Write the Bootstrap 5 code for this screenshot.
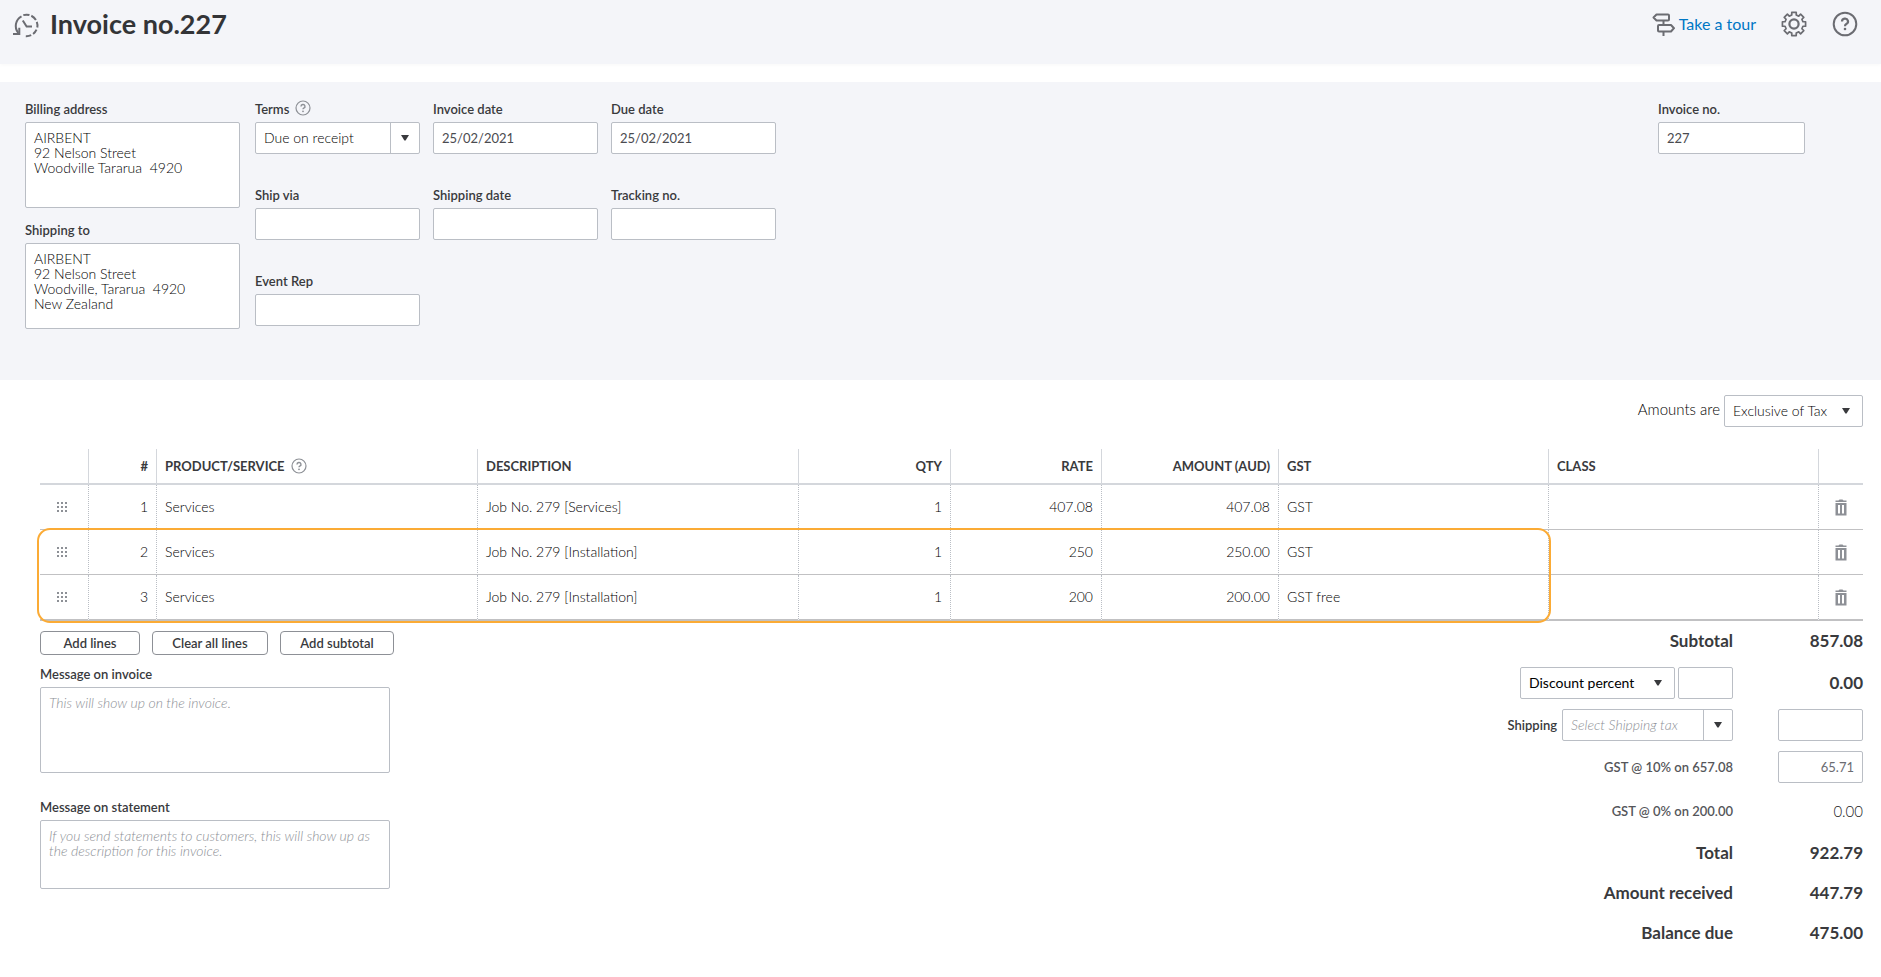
<!DOCTYPE html>
<html lang="en">
<head>
<meta charset="utf-8">
<meta name="viewport" content="width=device-width, initial-scale=1">
<title>Invoice no.227</title>
<link rel="stylesheet" href="https://cdn.jsdelivr.net/npm/bootstrap@5.3.0/dist/css/bootstrap.min.css">
<style>
:root { --ink: #393a3d; --line: #babec5; --panel: #f4f5f9; --arrow: url("data:image/svg+xml,%3Csvg xmlns='http://www.w3.org/2000/svg' viewBox='0 0 10 6'%3E%3Cpath d='M1 0h8L5.600 5.400h-1.200z' fill='%23393a3d'/%3E%3C/svg%3E"); }
body { font-family: Lato, "Liberation Sans", sans-serif; font-size: 13px; line-height: 15px; color: var(--ink); background: #fff; }
.topbar { background: var(--panel); height: 64px; padding: 7px 23px 0 12px; margin-bottom: 18px; box-shadow: 0 1px 4px rgba(0,0,0,.03); }
.topbar h1 { font-size: 27px; line-height: 34px; font-weight: 700; color: #333437; }
.icon-btn { background: none; border: 0; padding: 0; color: #6b6c72; display: block; line-height: 0; }
.top-tools { gap: 25px; }
.tour { font-size: 16px; line-height: 20px; font-weight: 400; color: #0077c5; text-decoration: none; }
.tour svg { color: #6b6c72; }
.details { background: var(--panel); min-height: 298px; padding: 18px 76px 50px 25px; gap: 15px; }
.field-label { font-size: 13px; line-height: 18px; font-weight: 600; margin-bottom: 4px; color: var(--ink); display: block; }
.form-control, .form-select { font-size: 14px; line-height: 20px; height: 32px; padding: 5px 8px; border: 1px solid var(--line); border-radius: 2px; color: #000; font-weight: 300; background-color: #fff; }
input.form-control { font-size: 13px; font-weight: 400; color: #4a4b50; }
textarea.form-control { line-height: 15px; padding: 7px 8px; resize: none; height: 86px; min-height: 0; overflow: hidden; }
textarea.short-area { height: 69px; }
.form-control::placeholder { color: #8d9096; font-style: italic; opacity: 1; }
.form-select { background-image: var(--arrow); background-size: 10px 6px; background-position: right 11px center; background-repeat: no-repeat; }
.form-select.split { background-image: var(--arrow), linear-gradient(var(--line), var(--line)); background-size: 10px 6px, 1px 100%; background-position: right 9px center, right 28px center; }
.address-col { width: 215px; }
.address-col .ship-label { margin-top: 13px; }
.fields { display: grid; grid-template-columns: repeat(3, 165px); column-gap: 13px; row-gap: 32px; align-content: start; }
.inv-no { width: 147px; }
.hint { color: #8d9096; }
.help-mark { margin-left: 6px; }
.work { padding: 15px 18px 20px 40px; }
.amounts { font-size: 15px; font-weight: 300; color: #000; }
.amounts label { padding-bottom: 4px; }
.tax-select { width: 139px; }
.lines-wrap { position: relative; margin-top: 22px; }
.lines { width: 100%; table-layout: fixed; border-collapse: separate; border-spacing: 0; font-size: 14px; line-height: 20px; }
.lines th { height: 36px; padding: 0 8px; font-size: 13px; font-weight: 700; border-bottom: 2px solid #d4d7dc; border-right: 1px solid #d4d7dc; white-space: nowrap; }
.lines td { height: 45px; padding: 0 8px; color: #000; font-weight: 300; border-bottom: 1px solid #c1c1c3; border-right: 1px dotted #babec5; }
.lines tr > :last-child { border-right: 0; }
.lines tbody tr:last-child td { border-bottom-width: 2px; height: 46px; }
.lines .icon-btn { margin: 0 auto; color: #8d9096; }
.lines .grip { margin-left: 9px; }
.callout { position: absolute; left: -3px; right: 17.1%; top: 79px; bottom: -2px; border: 2px solid #fbab35; border-radius: 13px; pointer-events: none; }
.btn-row { gap: 12px; margin: 10px 0; }
.btn-line { font-size: 13px; line-height: 18px; font-weight: 600; height: 24px; padding: 2px 0; color: var(--ink); border: 1px solid #8d9096; border-radius: 4px; background: #fff; }
.w-add { width: 100px; } .w-clear { width: 116px; } .w-sub { width: 114px; }
.messages { width: 350px; }
.messages .second { margin-top: 25px; }
.totals { display: grid; grid-template-columns: auto 130px; align-items: center; justify-items: end; font-weight: 600; }
.totals .big { font-size: 17px; line-height: 20px; font-weight: 700; }
.totals .tall { height: 44px; display: flex; align-items: center; }
.totals .reg { height: 40px; display: flex; align-items: center; }
.totals .gst-note { font-weight: 600; color: #55565a; }
.totals .pair { gap: 3px; }
.totals .ship-row { gap: 5px; }
.discount-select { width: 155px; font-weight: 400; }
.discount-pct { width: 55px; }
.ship-select { width: 171px; font-style: italic; color: #8d9096; }
input.value-box { width: 85px; text-align: right; color: #6b6c72; }
.light { font-size: 15px; font-weight: 300; color: #222; }
</style>
</head>
<body>
<svg width="0" height="0" class="d-none" aria-hidden="true">
  <symbol id="help" viewBox="0 0 16 16"><circle cx="8" cy="8" r="7" fill="none" stroke="currentColor" stroke-width="1.2"/><path d="M6 6.4a2 1.9 0 1 1 2.8 1.7Q8 8.500 8 9.300" fill="none" stroke="currentColor" stroke-width="1.400"/><circle cx="8" cy="11.300" r=".9" fill="currentColor"/></symbol>
  <symbol id="grip" viewBox="0 0 11 11"><path d="M0 0h2v2H0zM4 0h2v2H4zM8 0h2v2H8zM0 4h2v2H0zM4 4h2v2H4zM8 4h2v2H8zM0 8h2v2H0zM4 8h2v2H4zM8 8h2v2H8z" fill="currentColor"/></symbol>
  <symbol id="trash" viewBox="0 0 12 17"><path d="M.5 1.500h3L4.500 .5h3l1 1h3v1.500H.5z" fill="currentColor"/><path fill-rule="evenodd" d="M.5 4h11v12.500H.5zM3 6v8.500h2V6zM7 6v8.500h2V6z" fill="currentColor"/></symbol>
</svg>

<header class="topbar d-flex justify-content-between align-items-start">
  <div class="d-flex align-items-center">
    <button type="button" class="icon-btn me-2" aria-label="Recent transactions">
      <svg width="30" height="28" viewBox="0 0 30 28" fill="none" stroke="currentColor" stroke-width="2"><path d="M6.300 23A11 11 0 0 1 9.500 6.300"/><path d="M1 24h6.300v-6.300"/><path d="M11.300 5.100A11 11 0 0 1 25.300 17.500" stroke-dasharray="6.200 2"/><path d="M24.500 19.700A11 11 0 0 1 12.500 26" stroke-dasharray="5.500 2.200"/><path d="M10.800 10.500l3.800 6h5.400"/></svg>
    </button>
    <h1 class="m-0">Invoice no.227</h1>
  </div>
  <div class="top-tools d-flex align-items-center pt-1">
    <a href="#tour" class="tour d-flex align-items-center gap-1">
      <svg width="23" height="24" viewBox="0 0 23 24" fill="none" stroke="currentColor" stroke-width="2" stroke-linejoin="round"><path d="M4.500 2.500H16q1 0 1 1v4q0 1-1 1H4.500L1.500 5.500z"/><path d="M19 13H7q-1 0-1 1v4.500q0 1 1 1h12l3-3.300z"/><path d="M11.500 8.500V13M11.500 19.500V24"/></svg>
      Take a tour</a>
    <button type="button" class="icon-btn" aria-label="Settings">
      <svg width="26" height="26" viewBox="0 0 26 26" fill="none" stroke="currentColor" stroke-width="1.700" stroke-linejoin="round"><path id="gear" d="M13 1z"/><circle cx="13" cy="13" r="4.600" stroke-width="2.200"/></svg>
    </button>
    <button type="button" class="icon-btn" aria-label="Help">
      <svg width="26" height="26" viewBox="0 0 26 26" fill="none" stroke="currentColor" stroke-width="2"><circle cx="13" cy="13" r="11.300"/><path d="M10 10.500a3 2.800 0 1 1 4.300 2.500q-1.300.6-1.300 2.200" stroke-width="2.200"/><circle cx="13" cy="18" r="1.300" fill="currentColor" stroke="none"/></svg>
    </button>
  </div>
</header>

<main>
<section class="details d-flex">
  <div class="address-col">
    <label class="field-label" for="bill">Billing address</label>
    <textarea class="form-control" id="bill">AIRBENT
92 Nelson Street
Woodville Tararua  4920</textarea>
    <label class="field-label ship-label" for="shipto">Shipping to</label>
    <textarea class="form-control" id="shipto">AIRBENT
92 Nelson Street
Woodville, Tararua  4920
New Zealand</textarea>
  </div>
  <div class="fields">
    <div><div class="d-flex"><label class="field-label" for="terms">Terms</label><svg class="hint help-mark" width="16" height="16"><use href="#help"/></svg></div>
      <select class="form-select split" id="terms"><option>Due on receipt</option></select></div>
    <div><label class="field-label" for="invdate">Invoice date</label><input class="form-control" id="invdate" value="25/02/2021"></div>
    <div><label class="field-label" for="duedate">Due date</label><input class="form-control" id="duedate" value="25/02/2021"></div>
    <div><label class="field-label" for="via">Ship via</label><input class="form-control" id="via"></div>
    <div><label class="field-label" for="shipdate">Shipping date</label><input class="form-control" id="shipdate"></div>
    <div><label class="field-label" for="track">Tracking no.</label><input class="form-control" id="track"></div>
    <div><label class="field-label" for="rep">Event Rep</label><input class="form-control" id="rep"></div>
  </div>
  <div class="inv-no ms-auto"><label class="field-label" for="invno">Invoice no.</label><input class="form-control" id="invno" value="227"></div>
</section>

<section class="work">
  <div class="amounts d-flex justify-content-end align-items-center gap-1">
    <label for="tax">Amounts are</label>
    <select class="form-select tax-select" id="tax"><option>Exclusive of Tax</option></select>
  </div>

  <div class="lines-wrap">
    <table class="lines">
      <colgroup><col style="width:49px"><col style="width:68px"><col style="width:321px"><col style="width:321px"><col style="width:152px"><col style="width:151px"><col style="width:177px"><col style="width:270px"><col style="width:270px"><col style="width:44px"></colgroup>
      <thead><tr>
        <th></th><th class="text-end">#</th>
        <th><span class="d-flex align-items-center">PRODUCT/SERVICE<svg class="hint help-mark" width="16" height="16"><use href="#help"/></svg></span></th>
        <th>DESCRIPTION</th><th class="text-end">QTY</th><th class="text-end">RATE</th><th class="text-end">AMOUNT (AUD)</th><th>GST</th><th>CLASS</th><th></th>
      </tr></thead>
      <tbody>
        <tr><td><button type="button" class="icon-btn grip" aria-label="Move line 1"><svg width="11" height="11"><use href="#grip"/></svg></button></td><td class="text-end">1</td><td>Services</td><td>Job No. 279 [Services]</td><td class="text-end">1</td><td class="text-end">407.08</td><td class="text-end">407.08</td><td>GST</td><td></td><td><button type="button" class="icon-btn" aria-label="Delete line 1"><svg width="12" height="17"><use href="#trash"/></svg></button></td></tr>
        <tr><td><button type="button" class="icon-btn grip" aria-label="Move line 2"><svg width="11" height="11"><use href="#grip"/></svg></button></td><td class="text-end">2</td><td>Services</td><td>Job No. 279 [Installation]</td><td class="text-end">1</td><td class="text-end">250</td><td class="text-end">250.00</td><td>GST</td><td></td><td><button type="button" class="icon-btn" aria-label="Delete line 2"><svg width="12" height="17"><use href="#trash"/></svg></button></td></tr>
        <tr><td><button type="button" class="icon-btn grip" aria-label="Move line 3"><svg width="11" height="11"><use href="#grip"/></svg></button></td><td class="text-end">3</td><td>Services</td><td>Job No. 279 [Installation]</td><td class="text-end">1</td><td class="text-end">200</td><td class="text-end">200.00</td><td>GST free</td><td></td><td><button type="button" class="icon-btn" aria-label="Delete line 3"><svg width="12" height="17"><use href="#trash"/></svg></button></td></tr>
      </tbody>
    </table>
    <div class="callout"></div>
  </div>

  <div class="d-flex justify-content-between align-items-start">
    <div>
      <div class="d-flex btn-row">
        <button type="button" class="btn btn-line w-add">Add lines</button>
        <button type="button" class="btn btn-line w-clear">Clear all lines</button>
        <button type="button" class="btn btn-line w-sub">Add subtotal</button>
      </div>
      <div class="messages">
        <label class="field-label" for="msginv">Message on invoice</label>
        <textarea class="form-control" id="msginv" placeholder="This will show up on the invoice."></textarea>
        <label class="field-label second" for="msgst">Message on statement</label>
        <textarea class="form-control short-area" id="msgst" placeholder="If you send statements to customers, this will show up as the description for this invoice."></textarea>
      </div>
    </div>
    <div class="totals">
      <div class="big reg">Subtotal</div><div class="big reg">857.08</div>
      <div class="tall pair"><select class="form-select discount-select" aria-label="Discount type"><option>Discount percent</option></select><input class="form-control discount-pct" aria-label="Discount"></div><div class="big">0.00</div>
      <div class="reg ship-row"><label for="shiptax">Shipping</label><select class="form-select split ship-select" id="shiptax"><option>Select Shipping tax</option></select></div><input class="form-control value-box" aria-label="Shipping amount">
      <div class="tall gst-note">GST @ 10% on 657.08</div><input class="form-control value-box" aria-label="GST amount" value="65.71">
      <div class="tall gst-note">GST @ 0% on 200.00</div><div class="light">0.00</div>
      <div class="big reg">Total</div><div class="big reg">922.79</div>
      <div class="big reg">Amount received</div><div class="big reg">447.79</div>
      <div class="big reg">Balance due</div><div class="big reg">475.00</div>
    </div>
  </div>
</section>
</main>
<script>
// Eight-toothed settings gear, centred in its 26px box
(function () {
  var pts = [], n = 8;
  for (var i = 0; i < n; i++) {
    [[-14, 9.2], [-11, 11.8], [11, 11.8], [14, 9.2]].forEach(function (p) {
      var a = (i * 360 / n + p[0]) * Math.PI / 180;
      pts.push((13 + p[1] * Math.sin(a)).toFixed(2) + ' ' + (13 - p[1] * Math.cos(a)).toFixed(2));
    });
  }
  document.getElementById('gear').setAttribute('d', 'M' + pts.join('L') + 'Z');
})();
</script>
<script src="https://cdn.jsdelivr.net/npm/bootstrap@5.3.0/dist/js/bootstrap.bundle.min.js"></script>
</body>
</html>
